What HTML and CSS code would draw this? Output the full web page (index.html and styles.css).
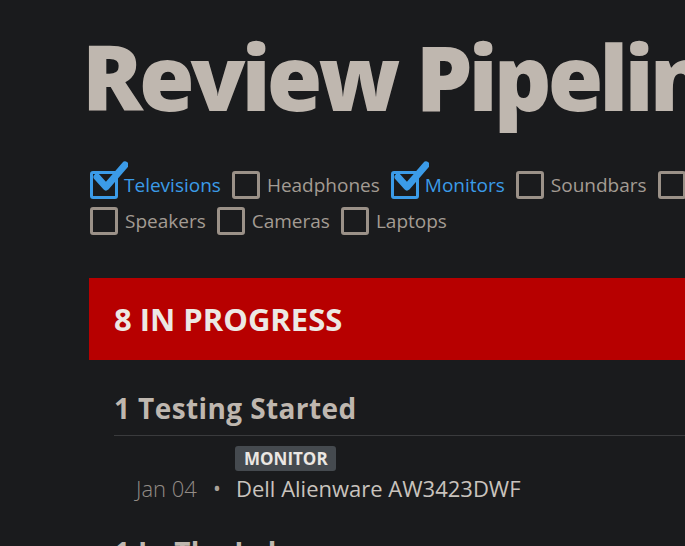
FILE: index.html
```html
<!DOCTYPE html>
<html lang="en">
<head>
    <meta charset="UTF-8">
    <meta name="viewport" content="width=device-width, initial-scale=1.0">
    <title>Review Pipeline</title>
    <link rel="stylesheet" href="styles.css">
</head>
<body>
    <div class="page">
        <h1 class="title">Review Pipeline</h1>

        <!-- category filters -->
        <div class="filters">
            <label class="filter checked"><span class="box"><svg class="tick" viewBox="0 0 40 40"><path d="M9 17 L18 27 L37 5"/></svg></span>Televisions</label>
            <label class="filter"><span class="box"></span>Headphones</label>
            <label class="filter checked"><span class="box"><svg class="tick" viewBox="0 0 40 40"><path d="M9 17 L18 27 L37 5"/></svg></span>Monitors</label>
            <label class="filter"><span class="box"></span>Soundbars</label>
            <label class="filter"><span class="box"></span>Projectors</label>
            <label class="filter"><span class="box"></span>Speakers</label>
            <label class="filter"><span class="box"></span>Cameras</label>
            <label class="filter"><span class="box"></span>Laptops</label>
        </div>

        <div class="status">
            <h2 class="status-head">8 IN PROGRESS</h2>

            <div class="stage">
                <h3 class="stage-head">1 Testing Started</h3>
                <div class="item">
                    <span class="date">Jan 04</span>
                    <span class="dot">&bull;</span>
                    <div class="info">
                        <span class="badge">MONITOR</span>
                        <span class="name">Dell Alienware AW3423DWF</span>
                    </div>
                </div>
            </div>

            <div class="stage">
                <h3 class="stage-head">1 In The Lab</h3>
            </div>
        </div>
    </div>
</body>
</html>
```
FILE: styles.css
```css
html, body {
    margin: 0;
    background-color: #1a1b1d;
    overflow: hidden;
}
body {
    font-family: "Open Sans", "Noto Sans", sans-serif;
    color: #bfb7af;
}
.page {
    width: 1100px;
    padding: 16px 0 0 82px;
}
.title {
    margin: 0;
    font-size: 90px;
    font-weight: 800;
    letter-spacing: -4px;
    line-height: 120px;
    color: #bfb7af;
    white-space: nowrap;
}
.filters {
    width: 720px;
    margin: 35px 0 0 8px;
    display: flex;
    flex-wrap: wrap;
    column-gap: 11px;
    row-gap: 8px;
}
.filter {
    display: flex;
    align-items: center;
    gap: 7px;
    font-size: 19px;
    font-stretch: 90%;
    color: #a39b93;
    height: 28px;
}
.filter.checked {
    color: #3b9be8;
    gap: 6px;
}
.box {
    position: relative;
    width: 22px;
    height: 22px;
    border: 3px solid #9b9188;
    border-radius: 3px;
}
.checked .box {
    border-color: #3b9be8;
}
.tick {
    position: absolute;
    left: -5px;
    top: -14px;
    width: 40px;
    height: 40px;
}
.tick path {
    fill: none;
    stroke: #3b9be8;
    stroke-width: 7;
    stroke-linecap: round;
    stroke-linejoin: round;
}
.status {
    margin: 43px 0 0 7px;
}
.status-head {
    margin: 0;
    height: 82px;
    display: flex;
    align-items: center;
    padding-left: 25px;
    background-color: #b70000;
    color: #ece8e4;
    font-size: 31px;
    font-weight: 700;
}
.stage {
    padding-left: 25px;
}
.stage-head {
    margin: 0;
    padding-top: 28px;
    height: 47px;
    font-size: 28px;
    font-weight: 700;
    letter-spacing: 0.4px;
    line-height: 40px;
    border-bottom: 1px solid #3a3b3d;
}
.item {
    display: flex;
    align-items: flex-end;
    padding: 10px 0 1px 22px;
}
.date {
    width: 63px;
    font-size: 22px;
    font-weight: 300;
    color: #938c86;
    line-height: 30px;
}
.dot {
    width: 36px;
    text-align: center;
    font-size: 21px;
    line-height: 30px;
    color: #aaa29a;
}
.info {
    display: flex;
    flex-direction: column;
    align-items: flex-start;
    gap: 2px;
}
.badge {
    background-color: #454a4f;
    color: #ebe7e3;
    font-size: 17px;
    font-weight: 700;
    padding: 0 8px 0 9px;
    border-radius: 3px;
    line-height: 25px;
}
.name {
    margin-left: 1px;
    font-size: 22px;
    color: #c9c3bd;
    line-height: 30px;
}
```
